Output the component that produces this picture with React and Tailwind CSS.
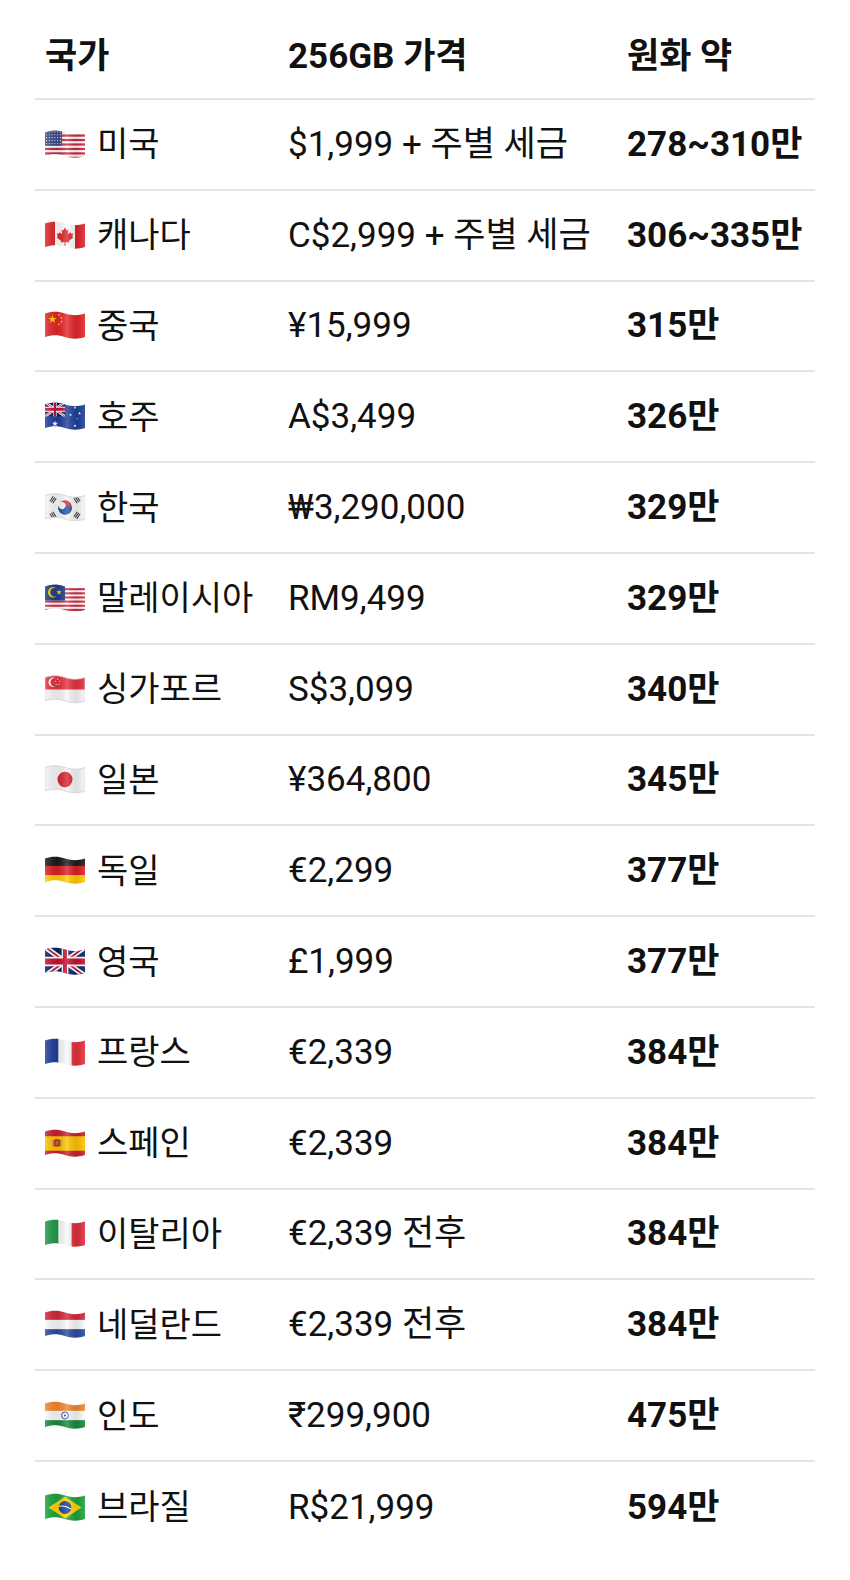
import React from "react";

function starPts(cx, cy, r, rot = -90) {
  const pts = [];
  for (let i = 0; i < 10; i++) {
    const rad = i % 2 === 0 ? r : r * 0.4;
    const a = ((rot + i * 36) * Math.PI) / 180;
    pts.push(`${(cx + rad * Math.cos(a)).toFixed(2)},${(cy + rad * Math.sin(a)).toFixed(2)}`);
  }
  return pts.join(" ");
}

function Star({ cx, cy, r, fill = "#fff", rot }) {
  return <polygon points={starPts(cx, cy, r, rot)} fill={fill} />;
}

function UnionJack({ x = 0, y = 0, w = 40, h = 28 }) {
  return (
    <svg x={x} y={y} width={w} height={h} viewBox="0 0 60 30" preserveAspectRatio="none">
      <rect width="60" height="30" fill="#012169" />
      <path d="M0,0 L60,30 M60,0 L0,30" stroke="#fff" strokeWidth="6" />
      <path d="M0,0 L60,30 M60,0 L0,30" stroke="#C8102E" strokeWidth="2" />
      <path d="M30,0 V30 M0,15 H60" stroke="#fff" strokeWidth="10" />
      <path d="M30,0 V30 M0,15 H60" stroke="#C8102E" strokeWidth="6" />
    </svg>
  );
}

const WAVE = "M0 2.5 C7 0.2 13 0.2 20 2.5 S33 4.8 40 2.5 V26 C33 28.3 27 28.3 20 26 S7 23.7 0 26 Z";

function Flag({ id, children, outline }) {
  return (
    <svg width="40" height="29" viewBox="0 0 40 29" className="shrink-0">
      <defs>
        <clipPath id={`clip-${id}`}>
          <path d={WAVE} />
        </clipPath>
        <linearGradient id={`sh-${id}`} x1="0" y1="0" x2="1" y2="0">
          <stop offset="0" stopColor="#fff" stopOpacity="0.18" />
          <stop offset="0.3" stopColor="#000" stopOpacity="0.08" />
          <stop offset="0.55" stopColor="#fff" stopOpacity="0.2" />
          <stop offset="0.8" stopColor="#000" stopOpacity="0.1" />
          <stop offset="1" stopColor="#fff" stopOpacity="0.12" />
        </linearGradient>
      </defs>
      <g clipPath={`url(#clip-${id})`}>
        <svg width="40" height="29" viewBox="0 0 40 28" preserveAspectRatio="none">
          {children}
        </svg>
        <rect width="40" height="29" fill={`url(#sh-${id})`} />
      </g>
      {outline && <path d={WAVE} fill="none" stroke="#d0d0d0" strokeWidth="0.8" />}
    </svg>
  );
}

const US = () => (
  <Flag id="us">
    <rect width="40" height="28" fill="#fff" />
    {Array.from({ length: 7 }).map((_, i) => (
      <rect key={i} y={(i * 2 * 28) / 13} width="40" height={28 / 13} fill="#c8283c" />
    ))}
    <rect width="17" height={(28 * 7) / 13} fill="#3b4b8c" />
    {Array.from({ length: 5 }).map((_, r) =>
      Array.from({ length: 6 }).map((_, c) => (
        <circle key={`${r}-${c}`} cx={1.6 + c * 2.75} cy={1.8 + r * 2.8} r="0.55" fill="#fff" />
      ))
    )}
  </Flag>
);

const CA = () => (
  <Flag id="ca">
    <rect width="40" height="28" fill="#fff" />
    <rect width="10" height="28" fill="#e0242b" />
    <rect x="30" width="10" height="28" fill="#e0242b" />
    <path
      d="M20 6 L21.6 9.2 L23.4 8.4 L22.8 12.6 L25.6 10.8 L26.2 12.4 L28.2 12 L27.2 15 L28.4 15.8 L23.8 19.2 L24.4 20.8 L20.5 20.2 L20.5 24 L19.5 24 L19.5 20.2 L15.6 20.8 L16.2 19.2 L11.6 15.8 L12.8 15 L11.8 12 L13.8 12.4 L14.4 10.8 L17.2 12.6 L16.6 8.4 L18.4 9.2 Z"
      fill="#e0242b"
    />
  </Flag>
);

const CN = () => (
  <Flag id="cn">
    <rect width="40" height="28" fill="#e5252a" />
    <Star cx={7.5} cy={8} r={4.2} fill="#ffde00" />
    <Star cx={14} cy={3.8} r={1.4} fill="#ffde00" rot={-60} />
    <Star cx={16.5} cy={6.6} r={1.4} fill="#ffde00" rot={-80} />
    <Star cx={16.5} cy={10.2} r={1.4} fill="#ffde00" rot={-100} />
    <Star cx={14} cy={12.8} r={1.4} fill="#ffde00" rot={-120} />
  </Flag>
);

const AU = () => (
  <Flag id="au">
    <rect width="40" height="28" fill="#1d3f9a" />
    <UnionJack w={20} h={14} />
    <Star cx={10} cy={21} r={3.2} />
    <Star cx={30} cy={5.5} r={1.6} />
    <Star cx={25.5} cy={12.5} r={1.6} />
    <Star cx={34.5} cy={11} r={1.6} />
    <Star cx={30} cy={23} r={1.8} />
    <Star cx={32} cy={16} r={0.9} />
  </Flag>
);

const Trigram = ({ x, y, rot }) => (
  <g transform={`translate(${x} ${y}) rotate(${rot})`}>
    <rect x="-3" y="-2.2" width="6" height="0.9" fill="#222" />
    <rect x="-3" y="-0.45" width="6" height="0.9" fill="#222" />
    <rect x="-3" y="1.3" width="6" height="0.9" fill="#222" />
  </g>
);

const KR = () => (
  <Flag id="kr" outline>
    <rect width="40" height="28" fill="#fafafa" />
    <g transform="rotate(33 20 14)">
      <path d="M13 14 A7 7 0 0 1 27 14 A3.5 3.5 0 0 1 20 14 A3.5 3.5 0 0 0 13 14 Z" fill="#d62d3c" />
      <path d="M13 14 A3.5 3.5 0 0 0 20 14 A3.5 3.5 0 0 1 27 14 A7 7 0 0 1 13 14 Z" fill="#2353a4" />
    </g>
    <Trigram x={8} y={6.5} rot={-56} />
    <Trigram x={32} y={21.5} rot={-56} />
    <Trigram x={32} y={6.5} rot={56} />
    <Trigram x={8} y={21.5} rot={56} />
  </Flag>
);

const MY = () => (
  <Flag id="my">
    <rect width="40" height="28" fill="#fff" />
    {Array.from({ length: 7 }).map((_, i) => (
      <rect key={i} y={i * 4} width="40" height="2" fill="#d2283c" />
    ))}
    <rect width="20" height="16" fill="#1b3d8f" />
    <circle cx="8" cy="8" r="5" fill="#ffcc00" />
    <circle cx="9.4" cy="8" r="4.2" fill="#1b3d8f" />
    <Star cx={14} cy={8} r={3} fill="#ffcc00" />
  </Flag>
);

const SG = () => (
  <Flag id="sg" outline>
    <rect width="40" height="28" fill="#f7f7f7" />
    <rect width="40" height="14" fill="#e7303f" />
    <circle cx="8" cy="7" r="4.5" fill="#fff" />
    <circle cx="9.6" cy="7" r="4.1" fill="#e7303f" />
    <Star cx={12.5} cy={4} r={0.9} />
    <Star cx={10.3} cy={6} r={0.9} />
    <Star cx={14.7} cy={6} r={0.9} />
    <Star cx={11.2} cy={9} r={0.9} />
    <Star cx={13.8} cy={9} r={0.9} />
  </Flag>
);

const JP = () => (
  <Flag id="jp" outline>
    <rect width="40" height="28" fill="#f8f8f8" />
    <circle cx="20" cy="14" r="7.5" fill="#d9232e" />
  </Flag>
);

const DE = () => (
  <Flag id="de">
    <rect width="40" height="10" fill="#1a1a1a" />
    <rect y="9.5" width="40" height="9.5" fill="#dd1f26" />
    <rect y="18.5" width="40" height="9.5" fill="#ffcc00" />
  </Flag>
);

const GB = () => (
  <Flag id="gb">
    <UnionJack w={40} h={28} />
  </Flag>
);

const FR = () => (
  <Flag id="fr">
    <rect width="14" height="28" fill="#1f3f9a" />
    <rect x="13.3" width="13.4" height="28" fill="#fafafa" />
    <rect x="26.6" width="13.4" height="28" fill="#e5303b" />
  </Flag>
);

const ES = () => (
  <Flag id="es">
    <rect width="40" height="28" fill="#c8202e" />
    <rect y="7" width="40" height="14" fill="#ffc400" />
    <rect x="9" y="10" width="6" height="7" rx="1.5" fill="#c8202e" />
    <rect x="10.5" y="11.5" width="3" height="4" fill="#b07a20" />
    <rect x="7.5" y="10.5" width="1.2" height="6.5" fill="#a08060" />
    <rect x="15.3" y="10.5" width="1.2" height="6.5" fill="#a08060" />
  </Flag>
);

const IT = () => (
  <Flag id="it">
    <rect width="14" height="28" fill="#1f9a4c" />
    <rect x="13.3" width="13.4" height="28" fill="#fafafa" />
    <rect x="26.6" width="13.4" height="28" fill="#df2f3c" />
  </Flag>
);

const NL = () => (
  <Flag id="nl">
    <rect width="40" height="10" fill="#d3283a" />
    <rect y="9.5" width="40" height="9.5" fill="#fafafa" />
    <rect y="18.5" width="40" height="9.5" fill="#2a4b9e" />
  </Flag>
);

const IN = () => (
  <Flag id="in">
    <rect width="40" height="10" fill="#f3872f" />
    <rect y="9.5" width="40" height="9.5" fill="#fafafa" />
    <rect y="18.5" width="40" height="9.5" fill="#1a8a3a" />
    <circle cx="20" cy="14" r="3.4" fill="none" stroke="#1e3a8a" strokeWidth="0.9" />
    <circle cx="20" cy="14" r="1" fill="#1e3a8a" />
  </Flag>
);

const BR = () => (
  <Flag id="br">
    <rect width="40" height="28" fill="#1ea33f" />
    <polygon points="20,3.5 36.5,14 20,24.5 3.5,14" fill="#ffd500" />
    <circle cx="20" cy="14" r="6.3" fill="#1c3f94" />
    <path d="M14 12.8 Q20 11.5 26 15.5" stroke="#fff" strokeWidth="1" fill="none" />
  </Flag>
);

const rows = [
  [US, "미국", "$1,999 + 주별 세금", "278~310만"],
  [CA, "캐나다", "C$2,999 + 주별 세금", "306~335만"],
  [CN, "중국", "¥15,999", "315만"],
  [AU, "호주", "A$3,499", "326만"],
  [KR, "한국", "₩3,290,000", "329만"],
  [MY, "말레이시아", "RM9,499", "329만"],
  [SG, "싱가포르", "S$3,099", "340만"],
  [JP, "일본", "¥364,800", "345만"],
  [DE, "독일", "€2,299", "377만"],
  [GB, "영국", "£1,999", "377만"],
  [FR, "프랑스", "€2,339", "384만"],
  [ES, "스페인", "€2,339", "384만"],
  [IT, "이탈리아", "€2,339 전후", "384만"],
  [NL, "네덜란드", "€2,339 전후", "384만"],
  [IN, "인도", "₹299,900", "475만"],
  [BR, "브라질", "R$21,999", "594만"],
];

export default function App() {
  return (
    <div className="w-[850px] h-[1580px] bg-white text-[#111111] font-['Roboto','Noto_Sans_CJK_KR',sans-serif] text-[34px] leading-none">
      <div className="mx-[35px]">
        <div className="grid grid-cols-[243px_339px_1fr] h-[100px] pt-[14px] items-center border-b-2 border-[#e4e4e4] font-bold text-[35px]">
          <div className="px-[10px]">국가</div>
          <div className="px-[10px]">256GB 가격</div>
          <div className="px-[10px]">원화 약</div>
        </div>
        {rows.map(([F, name, price, krw], i) => (
          <div
            key={name}
            className={`grid grid-cols-[243px_339px_1fr] h-[90.8px] items-center ${
              i < rows.length - 1 ? "border-b-2 border-[#e4e4e4]" : ""
            }`}
          >
            <div className="px-[10px] flex items-center gap-[12px] whitespace-nowrap">
              <F />
              <span>{name}</span>
            </div>
            <div className="px-[10px] whitespace-nowrap text-[35px]">{price}</div>
            <div className="px-[10px] whitespace-nowrap font-bold text-[35px]">{krw}</div>
          </div>
        ))}
      </div>
    </div>
  );
}
